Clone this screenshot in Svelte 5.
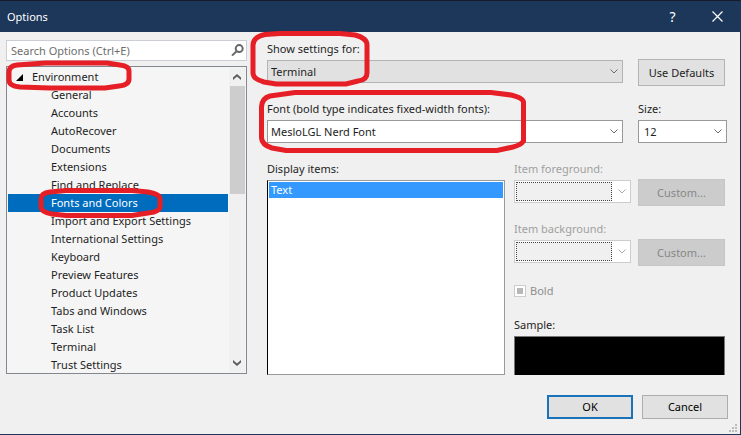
<script>
  const items = [
    'General', 'Accounts', 'AutoRecover', 'Documents', 'Extensions', 'Find and Replace',
    'Fonts and Colors', 'Import and Export Settings', 'International Settings', 'Keyboard',
    'Preview Features', 'Product Updates', 'Tabs and Windows', 'Task List', 'Terminal', 'Trust Settings'
  ];
  let selected = $state('Fonts and Colors');
  const colors = [
    { id: 'fg', label: 'Item foreground:' },
    { id: 'bg', label: 'Item background:' }
  ];
</script>

{#snippet chevron()}
  <svg class="chevron" viewBox="0 0 8 5" aria-hidden="true"><path d="M0.5 0.5 4 4 7.5 0.5" /></svg>
{/snippet}

<div class="dialog" role="dialog" aria-labelledby="title">
  <header>
    <h1 id="title">Options</h1>
    <button class="caption" aria-label="Help">?</button>
    <button class="caption" aria-label="Close">
      <svg width="11" height="11" viewBox="0 0 11 11"><path d="M0.5 0.5 10.5 10.5M10.5 0.5 0.5 10.5" /></svg>
    </button>
  </header>

  <main>
    <aside>
      <div class="search">
        <input type="text" aria-label="Search Options" placeholder="Search Options (Ctrl+E)" />
        <svg width="13" height="13" viewBox="0 0 13 13" aria-hidden="true">
          <circle cx="8.2" cy="4.6" r="3.5" /><path d="M5.6 7.2 1 11.6" />
        </svg>
      </div>
      <div class="tree">
        <div class="nodes">
          <button class="parent">
            <svg width="7" height="7" viewBox="0 0 7 7" aria-hidden="true"><path d="M7 0V7H0Z" /></svg>
            Environment
          </button>
          {#each items as item}
            <button class:selected={item === selected} onclick={() => (selected = item)}>{item}</button>
          {/each}
        </div>
        <div class="scrollbar" aria-hidden="true">
          <svg viewBox="0 0 8 6"><path d="M0 6V3.5L4 0 8 3.5V6L4 2.5Z" /></svg>
          <div class="thumb"></div>
          <svg viewBox="0 0 8 6"><path d="M0 0V2.5L4 6 8 2.5V0L4 3.5Z" /></svg>
        </div>
      </div>
    </aside>

    <section>
      <div class="row">
        <div class="field">
          <label for="settings">Show settings for:</label>
          <div class="combo grey"><select id="settings"><option>Terminal</option></select>{@render chevron()}</div>
        </div>
        <button class="side">Use Defaults</button>
      </div>
      <div class="row">
        <div class="field">
          <label for="font">Font (bold type indicates fixed-width fonts):</label>
          <div class="combo"><select id="font"><option>MesloLGL Nerd Font</option></select>{@render chevron()}</div>
        </div>
        <div class="field">
          <label for="size">Size:</label>
          <div class="combo size"><select id="size"><option>12</option></select>{@render chevron()}</div>
        </div>
      </div>
      <div class="lower">
        <div class="field">
          <span class="label" id="items-label">Display items:</span>
          <div class="list" role="listbox" aria-labelledby="items-label">
            <div role="option" aria-selected="true" tabindex="0">Text</div>
          </div>
        </div>
        <div class="details">
          {#each colors as color}
            <div class="color">
              <div class="field">
                <label for={color.id}>{color.label}</label>
                <div class="combo swatch"><select id={color.id} disabled><option></option></select><i></i>{@render chevron()}</div>
              </div>
              <button class="side" disabled>Custom...</button>
            </div>
          {/each}
          <label class="bold"><input type="checkbox" disabled />Bold</label>
          <span class="label">Sample:</span>
          <div class="sample"></div>
        </div>
      </div>
    </section>
  </main>

  <footer>
    <button class="ok">OK</button>
    <button>Cancel</button>
  </footer>

  <svg class="grip" width="8" height="8" viewBox="0 0 8 8" aria-hidden="true">
    <path d="M6 0h2v2h-2zM3 3h2v2h-2zM6 3h2v2h-2zM0 6h2v2h-2zM3 6h2v2h-2zM6 6h2v2h-2z" />
  </svg>

  <svg class="marks" width="741" height="435" viewBox="0 0 741 435" aria-hidden="true">
    <path d="M17 65 45 63H107L120 65Q129 66 129 71V79Q129 85 119 86L105 88H50L20 87Q9 86 9 80V72Q9 66 17 65Z" />
    <path d="M50 192 66 190.500H132L148 192Q160 194 160 199V206Q160 212 148 213L132 215.500H66L52 214Q41 212 41 207V199Q41 193 50 192Z" />
    <path d="M265 34.500 280 33.500H340L355 35Q367 38 367 45V73Q367 80 358 81L346 84H276L264 82Q253 79 253 73V45Q253 37 265 34.500Z" />
    <path d="M270 96 295 92.500H491L511 95Q524 98 523.500 103V141Q521 145 513 147L497 150.500H286L272 148Q262 145 261.500 138V107Q262 98 270 96Z" />
  </svg>
</div>

<style>
  :global(body) { margin: 0; }
  .dialog {
    position: relative;
    box-sizing: border-box;
    min-height: 100vh;
    display: flex;
    flex-direction: column;
    background: #f0f0f0;
    border: solid #1c3759;
    border-width: 0 1px 1px 0;
    border-top: 1px solid #141c2b;
    font: 11px/18px "Noto Sans", "Open Sans", sans-serif;
    color: #1e1e1e;
  }
  * { box-sizing: border-box; }
  button, input, select { font: inherit; color: inherit; margin: 0; }
  header {
    display: flex;
    align-items: center;
    height: 31px;
    padding-left: 7px;
    background: #1c3759;
    color: #fff;
  }
  h1 { flex: 1; margin: 0; font-size: 11px; font-weight: 400; }
  .caption { width: 45px; height: 31px; padding: 0; border: 0; background: none; font-size: 14px; }
  .caption path { stroke: #fff; fill: none; stroke-width: 1.2; }
  main { display: grid; grid-template-columns: 241px 1fr; gap: 20px; padding: 8px 13px 0 6px; align-items: start; }
  .search {
    display: flex;
    align-items: center;
    height: 21px;
    margin-bottom: 5px;
    padding-right: 2px;
    background: #fff;
    border: 1px solid #ccced6;
  }
  .search input { flex: 1; min-width: 0; height: 19px; padding: 0 4px; border: 0; background: none; outline: 0; }
  .search input::placeholder { color: #6d6d6d; opacity: 1; }
  .search svg { fill: none; stroke: #686868; stroke-width: 2; }
  .tree { display: flex; height: 308px; overflow: hidden; padding: 1px; background: #f5f5f5; border: 1px solid #828790; }
  .nodes { flex: 1; }
  .nodes button {
    display: block;
    width: 100%;
    height: 18px;
    padding: 0 0 0 43px;
    border: 0;
    background: none;
    text-align: left;
  }
  .nodes .parent { display: flex; align-items: center; gap: 9px; padding-left: 8px; }
  .nodes .selected { background: #006cbe; color: #fff; }
  .scrollbar { display: flex; flex-direction: column; align-items: center; width: 16px; margin-left: 1px; background: #f0f0f0; }
  .scrollbar svg { flex: none; width: 8px; height: 6px; margin: 6px 0; fill: #5a5a5a; }
  .thumb { width: 15px; height: 108px; margin-bottom: auto; background: #cdcdcd; }
  section { display: flex; flex-direction: column; gap: 15px; }
  .row { display: grid; grid-template-columns: 1fr 89px; gap: 15px; height: 45px; align-items: start; }
  .field { display: flex; flex-direction: column; }
  .field label, .label { height: 20px; }
  .combo { display: grid; align-items: center; height: 23px; background: #fff; border: 1px solid #999; }
  .combo select {
    grid-area: 1 / 1;
    width: 100%;
    height: 21px;
    padding: 0 3px;
    appearance: none;
    border: 0;
    background: none;
  }
  .size select { padding: 0 5px; }
  .grey { background: #e1e1e1; border-color: #b4b4b4; }
  .chevron { grid-area: 1 / 1; justify-self: end; width: 8px; height: 5px; margin-right: 4px; fill: none; stroke: #6c6c6c; pointer-events: none; }
  .side { width: 87px; height: 27px; margin-top: 19px; padding: 0; background: #e1e1e1; border: 1px solid #b4b4b4; }
  .side:disabled { background: #ccc; border-color: #c6c6c6; color: #878787; }
  .lower { display: grid; grid-template-columns: 1fr 213px; gap: 9px; }
  .list { flex: 1; padding: 1px; background: #fff; border: 1px solid #999; border-left-color: #000; }
  .list div { height: 16px; padding-left: 2px; background: #3399ff; color: #fff; line-height: 16px; }
  .details { display: flex; flex-direction: column; }
  .color { display: grid; grid-template-columns: 1fr 89px; gap: 7px; height: 60px; color: #a0a0a0; }
  .swatch { border-color: #ccc; }
  .swatch i { grid-area: 1 / 1; height: 19px; margin: 0 18px 0 1px; background: #f0f0f0; border: 1px dotted #444; }
  .swatch .chevron { stroke: #aaa; }
  .bold { display: flex; align-items: center; gap: 4px; height: 18px; margin: 2px 0 16px; color: #8d8d8d; }
  .bold input { width: 12px; height: 12px; appearance: none; background: #b8b8b8; border: 1px solid #ccc; box-shadow: inset 0 0 0 2px #fff; }
  .sample { width: 211px; height: 39px; background: #000; border: 1px solid #777; border-bottom: 0; }
  footer { display: flex; justify-content: flex-end; gap: 9px; padding: 20px 12px 15px 0; }
  footer button { width: 86px; height: 24px; padding: 0; background: #e1e1e1; border: 1px solid #adadad; color: #000; }
  footer .ok { border: 2px solid #1a72b8; }
  .grip { position: absolute; right: 3px; bottom: 2px; fill: #bbb; }
  .marks { position: absolute; left: 0; top: -1px; fill: none; stroke: #e61e25; stroke-width: 5; pointer-events: none; }
</style>
